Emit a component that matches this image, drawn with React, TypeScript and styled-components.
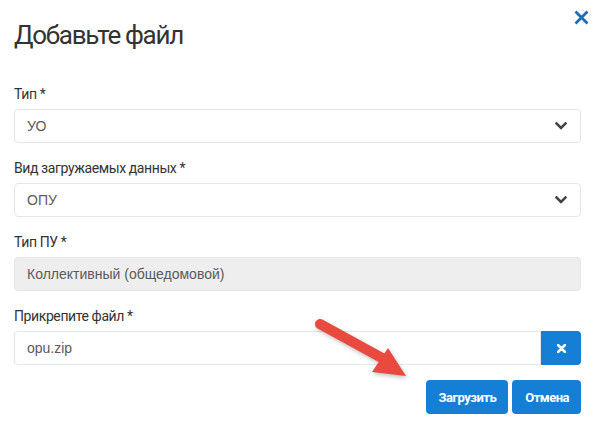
import styled, { createGlobalStyle } from "styled-components";

const GlobalStyle = createGlobalStyle`
  html, body {
    margin: 0;
    padding: 0;
    background: #ffffff;
  }
  * {
    box-sizing: border-box;
  }
`;

const Modal = styled.div`
  position: relative;
  width: 593px;
  height: 435px;
  padding: 20px 12px 0 14px;
  font-family: Roboto, "Liberation Sans", sans-serif;
  color: #333333;
`;

const Header = styled.header`
  display: flex;
  justify-content: space-between;
  align-items: flex-start;
  margin-right: -8px;
  margin-bottom: 34px;
`;

const Title = styled.h1`
  margin: 0;
  font-size: 26px;
  font-weight: 400;
  line-height: 30px;
  letter-spacing: -1.3px;
  color: #333333;
`;

const CloseButton = styled.button`
  margin-top: -10px;
  padding: 0;
  width: 15px;
  height: 15px;
  border: none;
  background: none;
  color: #1d6bb0;
  display: flex;
`;

const Field = styled.div`
  display: flex;
  flex-direction: column;
  margin-bottom: 15px;
`;

const Label = styled.label`
  font-size: 14px;
  line-height: 20px;
  letter-spacing: -0.4px;
  margin-bottom: 5px;
  color: #333333;
`;

const Box = styled.div<{ $disabled?: boolean; $joined?: boolean }>`
  flex: 1 1 auto;
  height: 34px;
  display: flex;
  align-items: center;
  justify-content: space-between;
  padding: 0 13px 0 12px;
  border: 1px solid #e3e6ea;
  border-radius: ${(p) => (p.$joined ? "4px 0 0 4px" : "4px")};
  background: ${(p) => (p.$disabled ? "#eeeeee" : "#ffffff")};
  font-family: "Liberation Sans", Arial, sans-serif;
  font-size: 14px;
  color: #5a5a5a;
`;

const InputGroup = styled.div`
  display: flex;
`;

const ClearButton = styled.button`
  flex: none;
  width: 40px;
  height: 34px;
  border: none;
  border-radius: 0 4px 4px 0;
  background: #157fd6;
  display: flex;
  align-items: center;
  justify-content: center;
  padding: 0;
`;

const Footer = styled.div`
  display: flex;
  justify-content: flex-end;
  gap: 4px;
`;

const Button = styled.button`
  height: 34px;
  padding: 0 12px 0 13px;
  border: none;
  border-radius: 4px;
  background: #157fd6;
  color: #ffffff;
  font-family: Roboto, "Liberation Sans", sans-serif;
  font-weight: 700;
  font-size: 13px;
  letter-spacing: -0.5px;
`;

const Pointer = styled.svg`
  position: absolute;
  left: 300px;
  top: 310px;
  overflow: visible;
  filter: drop-shadow(1px 2px 2px rgba(0, 0, 0, 0.25));
`;

function Chevron() {
  return (
    <svg width="12" height="8" viewBox="0 0 12 8">
      <polyline
        points="1.5,1.5 6,6 10.5,1.5"
        fill="none"
        stroke="#444"
        strokeWidth="2.6"
        strokeLinecap="square"
      />
    </svg>
  );
}

function App() {
  return (
    <>
      <GlobalStyle />
      <Modal>
        <Header>
          <Title>Добавьте файл</Title>
          <CloseButton>
            <svg width="15" height="15" viewBox="0 0 15 15">
              <path
                d="M1.5 1.5 L13.5 13.5 M13.5 1.5 L1.5 13.5"
                stroke="currentColor"
                strokeWidth="2.8"
              />
            </svg>
          </CloseButton>
        </Header>

        <Field>
          <Label>Тип *</Label>
          <Box>
            УО
            <Chevron />
          </Box>
        </Field>

        <Field>
          <Label>Вид загружаемых данных *</Label>
          <Box>
            ОПУ
            <Chevron />
          </Box>
        </Field>

        <Field>
          <Label>Тип ПУ *</Label>
          <Box $disabled>Коллективный (общедомовой)</Box>
        </Field>

        <Field>
          <Label>Прикрепите файл *</Label>
          <InputGroup>
            <Box $joined>opu.zip</Box>
            <ClearButton>
              <svg width="9" height="9" viewBox="0 0 9 9">
                <path
                  d="M1 1 L8 8 M8 1 L1 8"
                  stroke="#fff"
                  strokeWidth="2.6"
                  strokeLinecap="round"
                />
              </svg>
            </ClearButton>
          </InputGroup>
        </Field>

        <Footer>
          <Button>Загрузить</Button>
          <Button>Отмена</Button>
        </Footer>

        <Pointer width="120" height="80">
          <line
            x1="20"
            y1="14"
            x2="82"
            y2="48"
            stroke="#e84a40"
            strokeWidth="10"
            strokeLinecap="round"
          />
          <polygon points="88,38 72,62 106,66" fill="#e84a40" />
        </Pointer>
      </Modal>
    </>
  );
}

export default App;
